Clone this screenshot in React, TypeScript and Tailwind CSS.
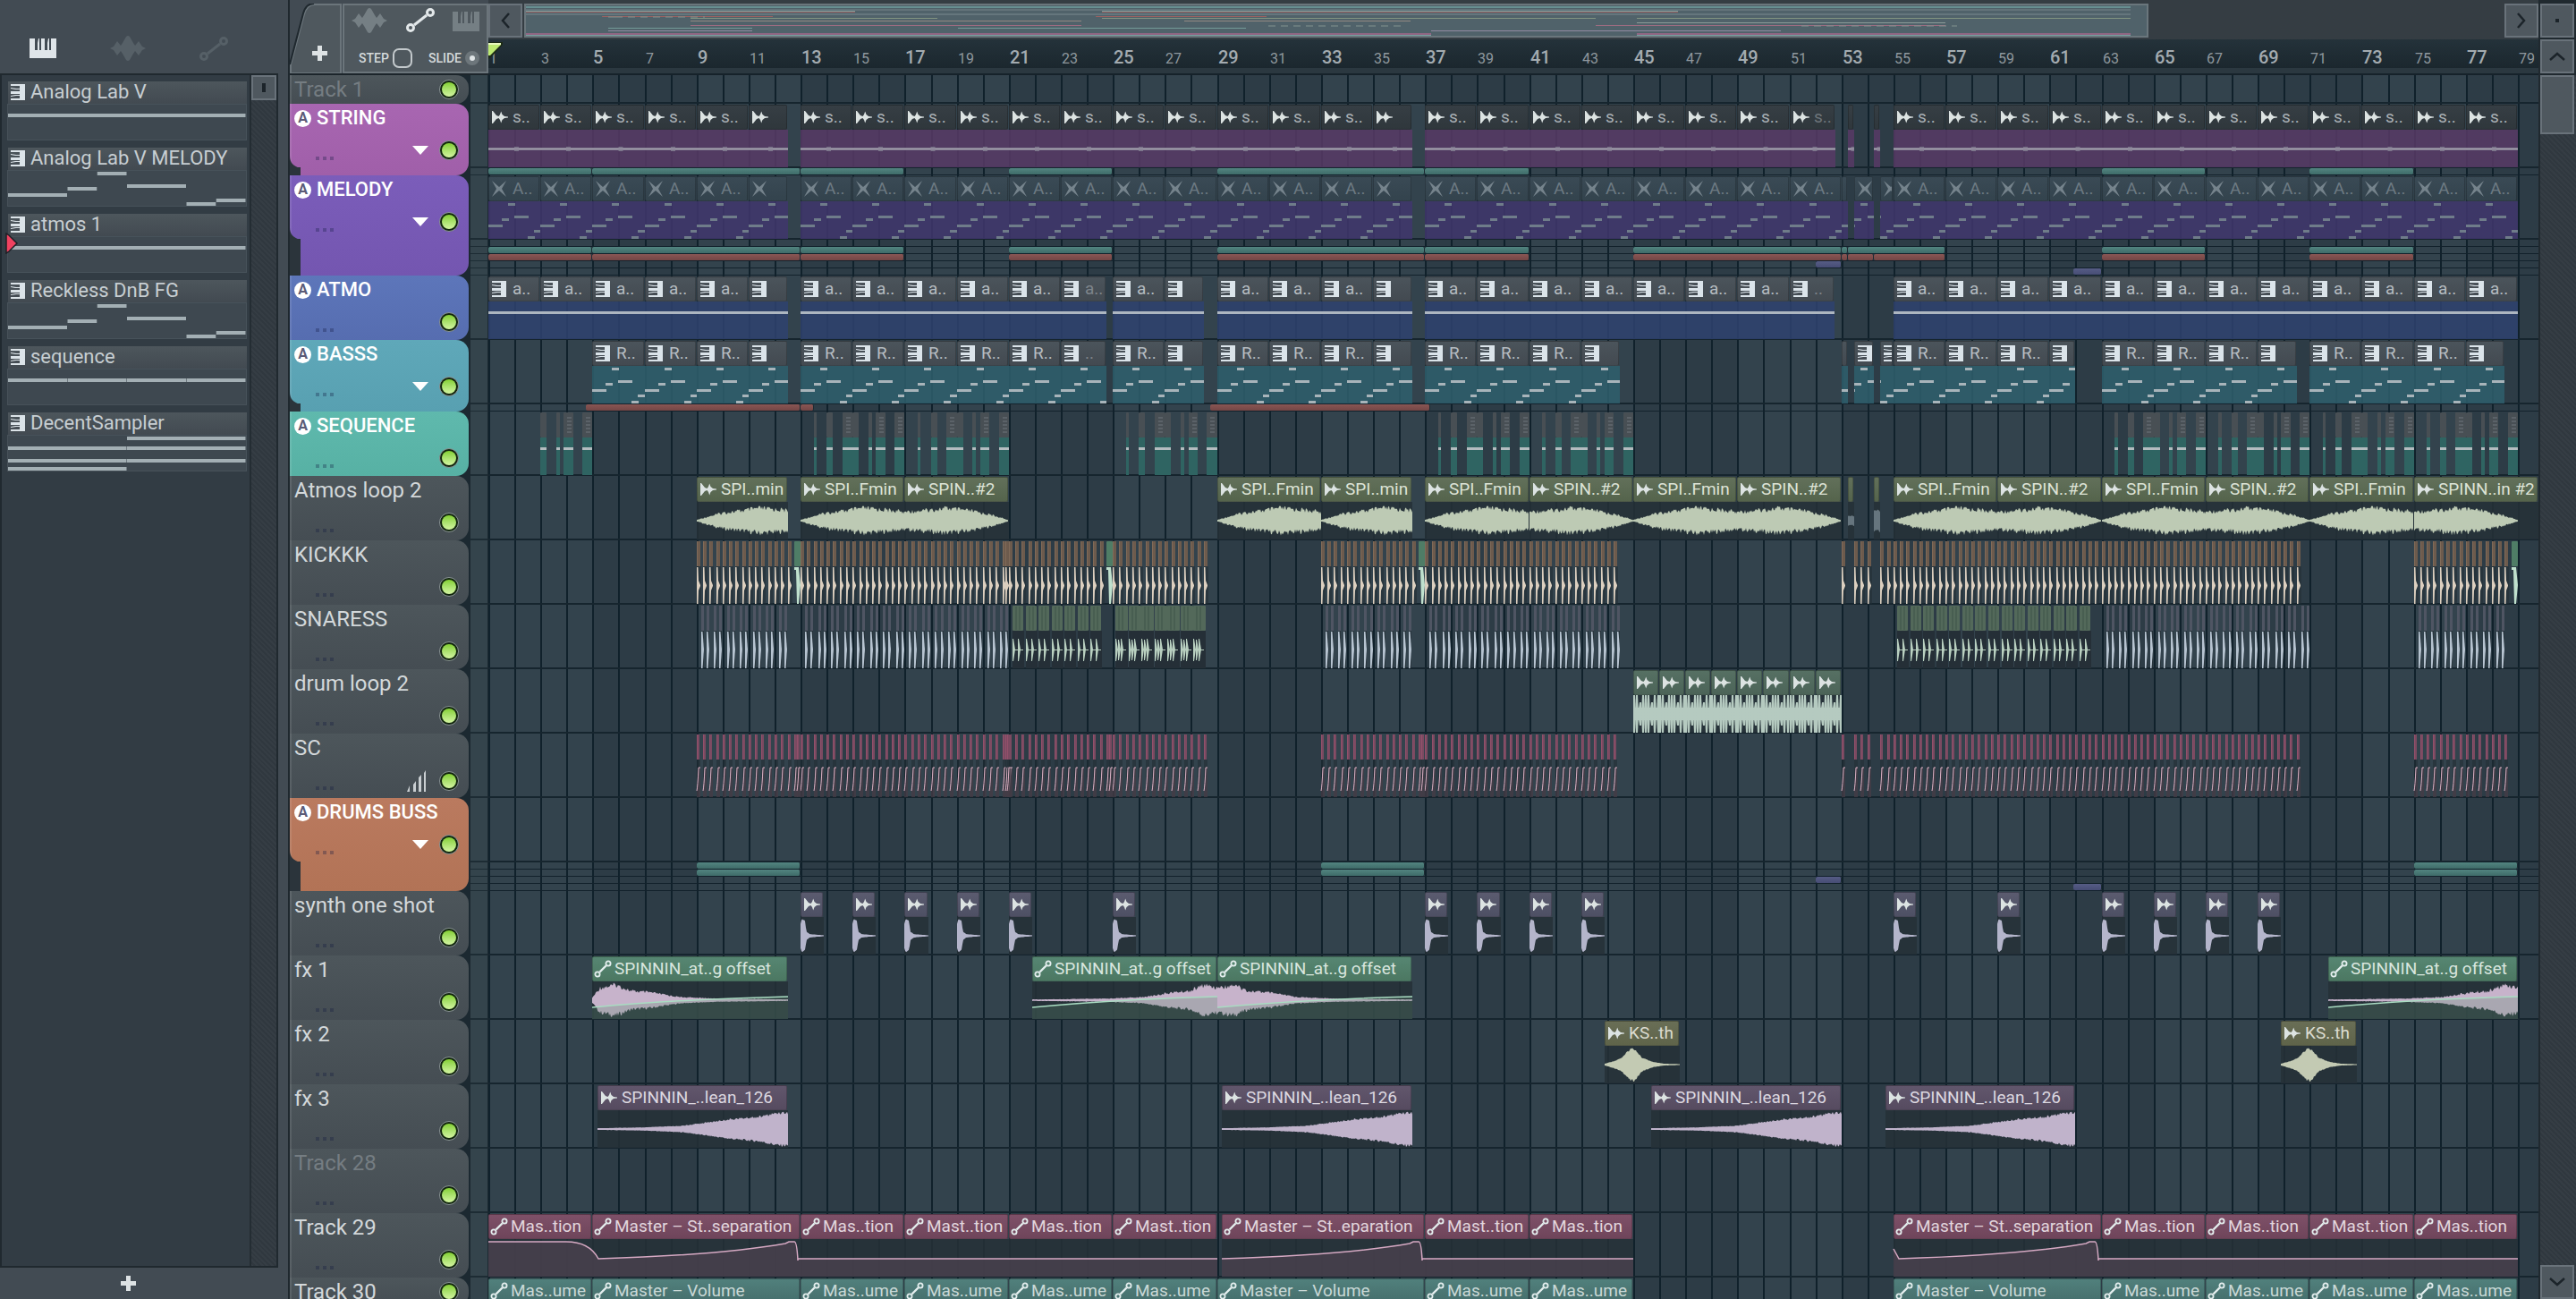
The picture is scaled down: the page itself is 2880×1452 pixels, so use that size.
import type { ReactNode } from 'react';

const BAR = 29.09;
const BODY = 42;
const px = (bar: number) => Math.round((bar - 1) * BAR);

type Icon = 'wave' | 'keys' | 'cross' | 'link' | 'none';
type Clip = { s: number; e: number; label?: string; dim?: boolean };
type Lane = { color: string; spans: number[][] };
type Track = {
  name: string;
  group?: string;
  muted?: boolean;
  meter?: boolean;
  short?: boolean;
  icon?: Icon;
  head?: string;
  body?: string;
  text?: string;
  clips?: Clip[];
  draw?: (clip: Clip, w: number) => ReactNode;
  overlay?: ReactNode;
  lanes?: Lane[];
};

const DARK = 'bg-[#263037d9]';
const TEAL = 'from-[#528480] to-[#3f6c69]';
const RED = 'from-[#8a5654] to-[#734645]';
const INDIGO = 'from-[#565c85] to-[#474d75]';

// two-bar clips repeated from s until e
const run = (s: number, e: number, label: string, tail?: string): Clip[] => {
  const out: Clip[] = [];
  for (let b = s; b < e; b += 2) {
    const end = Math.min(b + 2, e);
    const full = end - b > 1.9;
    out.push({ s: b, e: end, label: full ? label : tail, dim: !full && !!tail });
  }
  return out;
};

const steps = (s: number, e: number, by = 0.25) => {
  const out: number[] = [];
  for (let b = s; b < e - 0.001; b += by) out.push(b);
  return out;
};

const noise = (i: number) => {
  const v = Math.sin(i * 12.9898) * 43758.5453;
  return v - Math.floor(v);
};

const lerp = (points: number[][], t: number) => {
  for (let i = 1; i < points.length; i++) {
    const [x0, y0] = points[i - 1];
    const [x1, y1] = points[i];
    if (t <= x1) return y0 + ((y1 - y0) * (t - x0)) / (x1 - x0 || 1);
  }
  return points[points.length - 1][1];
};

const wavePath = (w: number, env: (t: number) => number, rough = 0.25) => {
  let top = '';
  let bottom = '';
  for (let i = 0; i <= w; i++) {
    const a = env(i / w);
    const up = Math.max(0.6, a * (1 - rough * noise(i + 3)));
    const down = Math.max(0.6, a * (1 - rough * noise(i + 91)));
    top += `${i ? 'L' : 'M'}${i} ${(21 - up).toFixed(1)}`;
    bottom = `L${i} ${(21 + down).toFixed(1)}` + bottom;
  }
  return top + bottom + 'Z';
};

const Drawing = ({ w, children }: { w: number; children: ReactNode }) => (
  <svg className="absolute inset-0" width={w} height={BODY} viewBox={`0 0 ${w} ${BODY}`} aria-hidden="true">
    {children}
  </svg>
);

const MELODY = [
  [0, 0.25, 26],
  [0.25, 0.375, 19],
  [0.375, 0.5, 2],
  [0.5, 0.75, 16],
  [0.75, 0.875, 39],
  [0.875, 1, 32],
];

const drawNotes = (color: string) => (clip: Clip, w: number) => {
  const phase = ((clip.s - 1) % 2) * BAR;
  return (
    <Drawing w={w}>
      {MELODY.map(([a, b, y]) => (
        <rect key={a} x={Math.round(a * 2 * BAR - phase)} y={y} width={Math.round((b - a) * 2 * BAR) + 1} height="3" fill={color} />
      ))}
    </Drawing>
  );
};

const drawLine = (color: string, y: number, h: number) => (_: Clip, w: number) => (
  <Drawing w={w}>
    <rect y={y} width={w} height={h} fill={color} />
  </Drawing>
);

const drawString = (_: Clip, w: number) => (
  <Drawing w={w}>
    <rect y="20" width={w} height="3" fill="#827d90" />
    <rect x={w / 2} y="19" width="5" height="5" fill="#7d778c" />
    <rect y="21" width={w} height="1" fill="#a5a0af" />
  </Drawing>
);

const ATMOS_ENV = [[0, 1], [0.06, 6], [0.13, 11], [0.2, 13], [0.3, 17], [0.4, 15], [0.5, 12], [0.6, 14], [0.7, 17], [0.83, 13], [0.93, 7], [1, 1]];

const drawAtmos = (clip: Clip, w: number) => {
  if (clip.e - clip.s < 1) {
    return (
      <Drawing w={w}>
        <path d={wavePath(w, () => (clip.s > 54 ? 13 : 6))} fill="#66757e" />
      </Drawing>
    );
  }
  const second = clip.label!.endsWith('#2');
  const bars = Math.min(clip.e - clip.s, 4);
  return (
    <Drawing w={w}>
      <path
        d={wavePath(Math.round(bars * BAR), (t) => lerp(ATMOS_ENV, (t * bars) / 8 + (second ? 0.5 : 0)), 0.38)}
        fill="#bdcab4"
      />
    </Drawing>
  );
};

const drawLoop = (_: Clip, w: number) => (
  <Drawing w={w}>
    <rect y="14" width={w} height="14" fill="#b5cac0" />
    {[0, 3, 7, 10, 13, 16, 20, 23, 27].map((x, i) => (
      <path key={x} d={i % 4 === 2 ? `M${x} 8h2l1 13-1 13h-2l-2-13z` : `M${x} 0h2l1 21-1 21h-2l-1-21z`} fill="#b5cac0" />
    ))}
  </Drawing>
);

const drawShot = (_: Clip, w: number) => (
  <Drawing w={w}>
    <path d={wavePath(w, (t) => lerp([[0, 14], [0.06, 20], [0.2, 17], [0.25, 5], [0.4, 2], [0.8, 1], [1, 0.6]], t), 0.1)} fill="#b4b5cb" />
  </Drawing>
);

const FALL = [[0, 3], [0.04, 16], [0.12, 20], [0.2, 12], [0.3, 10], [0.45, 4], [0.65, 2], [1, 1]];

const drawSweep = (clip: Clip, w: number) => {
  const env = (t: number) => {
    if (clip.s === 5) return lerp(FALL, t);
    if (clip.s === 29) return lerp(FALL, Math.min(1, t + 0.04));
    return lerp(FALL, 1.05 - t);
  };
  return (
    <Drawing w={w}>
      <path d={wavePath(w, env, 0.3)} fill="#c7b3cb" />
      <path d={`M0 29Q${w * 0.45} 20 ${w} 17V42H0Z`} fill="#5f8a70" fillOpacity="0.28" />
      <path d={`M0 29Q${w * 0.45} 20 ${w} 17`} fill="none" stroke="#a9dcc2" strokeWidth="1.5" />
    </Drawing>
  );
};

const drawHit = (_: Clip, w: number) => (
  <Drawing w={w}>
    <path d={wavePath(w, (t) => lerp([[0, 1], [0.15, 5], [0.24, 9], [0.34, 19], [0.4, 19], [0.5, 8], [0.65, 3], [0.8, 1], [1, 0.6]], t), 0.15)} fill="#c3cab3" />
  </Drawing>
);

const drawRise = (_: Clip, w: number) => (
  <Drawing w={w}>
    <path d={wavePath(w, (t) => lerp([[0, 1], [0.25, 2], [0.45, 4], [0.7, 12], [0.85, 15], [0.95, 20], [1, 20]], t), 0.18)} fill="#c0b3cb" />
  </Drawing>
);

// lays a whole row of very short clips over the timeline
const Row = ({ children }: { children: ReactNode }) => (
  <svg className="absolute left-0 top-px" width={px(80)} height="70" viewBox={`0 0 ${px(80)} 70`} aria-hidden="true">
    {children}
  </svg>
);

const KICKS = [
  ...steps(9, 12.75),
  ...steps(13, 21),
  20.87,
  ...steps(21, 24.75),
  ...steps(25, 28.75),
  ...steps(33, 36.75),
  ...steps(37, 44.5),
  53, 53.5, 53.75, 54, 54.5, 54.75,
  ...steps(55, 70.75),
  ...steps(75, 78.75),
];

const SIDE = [...KICKS, 12.75, 12.87, 20.94, 24.75, 24.87, 36.75, 36.87];

const Kicks = () => (
  <Row>
    {KICKS.map((b) => {
      const x = px(b);
      return (
        <g key={b}>
          <rect x={x} width="4" height="28" fill="#6d5b4d" />
          <rect x={x} width="1" height="28" fill="#806a58" />
          <rect x={x} y="28" width="5" height="42" fill="#232e35" fillOpacity="0.6" />
          <path d={`M${x} 29h1.500l.5 15 2 5v1l-2 5-.5 15h-1.500z`} fill="#dccfbf" />
        </g>
      );
    })}
    {[12.75, 24.75, 36.75, 78.75].map((b) => {
      const x = px(b);
      return (
        <g key={b}>
          <rect x={x} width="7" height="28" rx="1" fill="#4f7d66" />
          <path d={`M${x} 29h5l2 20-2 21h-2l-1-38h-2z`} fill="#bfe0cd" />
        </g>
      );
    })}
  </Row>
);

const SNARES = [
  ...steps(9, 12.5, 0.5),
  ...steps(13, 21, 0.5),
  ...steps(33, 36.5, 0.5),
  ...steps(37, 44.5, 0.5),
  ...steps(63, 71, 0.5),
  ...steps(75, 78.5, 0.5),
];
const CLAPS = [...steps(21.15, 24.5, 0.5), ...steps(55.15, 62.5, 0.5)];
const FILLS = steps(25.1, 28.5, 0.5);

const Snares = () => (
  <Row>
    {SNARES.flatMap((b) => [b + 0.17, b + 0.38]).map((b) => {
      const x = px(b);
      return (
        <g key={b}>
          <rect x={x} width="3" height="28" fill="#4f5563" />
          <rect x={x} y="28" width="3" height="42" fill="#232e35" fillOpacity="0.6" />
          <path d={`M${x} 29h1.500l1.500 20-1.500 21h-1.500z`} fill="#b6c3d0" />
        </g>
      );
    })}
    {[...CLAPS, ...FILLS].map((b) => {
      const x = px(b);
      const dense = b > 25 && b < 29;
      return (
        <g key={b}>
          <rect x={x} width={dense ? 14 : 12} height="28" rx="1" fill="#53695a" />
          <path d={`M${x + 4} 1v26M${x + 8} 1v26`} stroke="#3f5448" />
          <rect x={x} y="28" width={dense ? 14 : 13} height="42" fill="#252f37" />
          <path d={`M${x} 37h1l2 12-2 13h-1zM${x + 6} 37h1l2 12-2 13h-1z${dense ? `M${x + 3} 38h1l2 11-2 12h-1z` : ''}M${x} 49h12v1h-12z`} fill="#b9d0c0" />
        </g>
      );
    })}
  </Row>
);

const SideChain = () => (
  <Row>
    {SIDE.map((b) => {
      const x = px(b);
      return (
        <g key={b}>
          <rect x={x} width="3" height="28" fill="#7b4a61" />
          <rect x={x} width="1" height="28" fill="#93506b" />
          <rect x={x} y="28" width="4" height="42" fill="#232e35" fillOpacity="0.6" />
          <path d={`M${x} 63L${x + 2} 37h2v33h-4z`} fill="#5a4350" fillOpacity="0.5" />
          <path d={`M${x} 63q1 -4 2 -26h2`} fill="none" stroke="#e0b4c8" />
        </g>
      );
    })}
  </Row>
);

const SEQ = [[0.5, 0.62], [1, 1.24], [1.6, 2], [2, 2.24], [2.6, 2.74], [2.9, 3.26], [3.62, 4]];

const Sequence = () => (
  <Row>
    {[1, 13, 17, 25, 37, 41, 63, 67, 71, 75].flatMap((cell) =>
      SEQ.filter(([a]) => cell > 1 || a >= 2).map(([a, b]) => {
        const x = px(cell + a);
        const w = px(cell + b) - x;
        return (
          <g key={cell + a}>
            <rect x={x} width={w} height="28" rx="1" fill="#484f54" />
            {w > 9 && <path d={`M${x + 4} 6h5M${x + 4} 10h5M${x + 4} 14h5M${x + 4} 18h5M${x + 4} 22h5`} stroke="#6f777c" />}
            <rect x={x} y="28" width={w} height="42" fill="#2f6462" />
            <rect x={x} y="39" width={w} height="3" fill="#b3bcbf" />
          </g>
        );
      }),
    )}
  </Row>
);

const rise = (b: number) => `Q${px(b + 4.5)} 46 ${px(b + 7)} 33l4 -2h6q3 0 4 21v-2`;
const CURVES: [number, number, string][] = [
  [1, 29, `M0 31H${px(4)}q26 0 36 19${rise(5.4)}H${px(29)}`],
  [29.2, 45, `M${px(29.2)} 50${rise(29.4)}H${px(45)}`],
  [55, 79, `M${px(55)} 39l6 11${rise(55.4)}H${px(79)}`],
];

const Separation = () => (
  <Row>
    {CURVES.map(([s, e, d]) => (
      <g key={s}>
        <rect x={px(s)} y="28" width={px(e) - px(s)} height="42" fill="#263037" fillOpacity="0.85" />
        <path d={`${d}V70H${px(s)}Z`} fill="#4d4350" fillOpacity="0.75" />
        <path d={d} fill="none" stroke="#d6a9c3" strokeWidth="1.5" />
      </g>
    ))}
  </Row>
);

const each = (spans: [number, number, string][]): Clip[] => spans.map(([s, e, label]) => ({ s, e, label }));

const TRACKS: Track[] = [
  { name: 'Track 1', muted: true, short: true },
  {
    name: 'STRING',
    group: 'from-[#a866b1] to-[#a05fa9]',
    icon: 'wave',
    head: 'from-[#363e44] to-[#2f373c]',
    body: 'bg-[#583a66d9]',
    text: 'text-[#a9b0b5]',
    clips: [
      ...run(1, 12.5, 's..'), ...run(13, 36.5, 's..'), ...run(37, 52.78, 's..', 's..'),
      { s: 53.25, e: 53.5 }, { s: 54.25, e: 54.5 }, ...run(55, 79, 's..'),
    ],
    draw: drawString,
    lanes: [{ color: TEAL, spans: [[1, 5], [5, 13], [13, 17], [21, 25], [29, 37], [37, 41], [63, 67], [71, 75]] }],
  },
  {
    name: 'MELODY',
    group: 'from-[#7b5dba] to-[#7456b0]',
    icon: 'cross',
    head: 'from-[#3a4a55] to-[#33434d]',
    body: 'bg-[#41366dd9]',
    text: 'text-[#6d7a83]',
    clips: [
      ...run(1, 12.5, 'A..'), ...run(13, 36.5, 'A..'), ...run(37, 53.25, 'A..'),
      { s: 53.5, e: 54.25 }, { s: 54.5, e: 55 }, ...run(55, 79, 'A..'),
    ],
    draw: drawNotes('#6f7c8a'),
    lanes: [
      { color: TEAL, spans: [] },
      { color: TEAL, spans: [[1, 5], [5, 13], [13, 17], [21, 25], [29, 37], [37, 41], [45, 53], [53, 53.25], [53.25, 57], [63, 67], [71, 75]] },
      { color: RED, spans: [[1, 5], [5, 13], [13, 17], [21, 25], [29, 37], [37, 41], [45, 53], [53, 53.25], [53.25, 54.25], [54.25, 57], [63, 67], [71, 75]] },
      { color: INDIGO, spans: [[52, 53]] },
      { color: INDIGO, spans: [[61.9, 63]] },
    ],
  },
  {
    name: 'ATMO',
    group: 'from-[#5d76ba] to-[#566db0]',
    icon: 'keys',
    head: 'from-[#4b545b] to-[#434a51]',
    body: 'bg-[#2f4270d9]',
    text: 'text-[#b6bdc2]',
    clips: [
      ...run(1, 12.5, 'a..'), ...run(13, 24.75, 'a..', 'a..'), ...run(25, 28.5, 'a..'),
      ...run(29, 36.5, 'a..'), ...run(37, 52.73, 'a..', '..'), ...run(55, 79, 'a..'),
    ],
    draw: drawLine('#adb6c0', 11, 3),
  },
  {
    name: 'BASSS',
    group: 'from-[#5fa8b9] to-[#58a0b1]',
    icon: 'keys',
    head: 'from-[#4b545b] to-[#434a51]',
    body: 'bg-[#2f5f6dd9]',
    text: 'text-[#b6bdc2]',
    clips: [
      ...run(5, 12.5, 'R..'), ...run(13, 24.75, 'R..', '..'), ...run(25, 28.5, 'R..'),
      ...run(29, 36.5, 'R..'), ...run(37, 44.5, 'R..'), { s: 53, e: 53.25 }, { s: 53.5, e: 54.25 },
      { s: 54.5, e: 55 }, ...run(55, 62, 'R..'), ...run(63, 70.5, 'R..'), ...run(71, 78.5, 'R..'),
    ],
    draw: drawNotes('#a8b4ba'),
    lanes: [{ color: RED, spans: [[4.75, 13], [13, 13.5], [28.75, 37.2]] }],
  },
  { name: 'SEQUENCE', group: 'from-[#5fb9ad] to-[#57b1a4]', overlay: <Sequence /> },
  {
    name: 'Atmos loop 2',
    icon: 'wave',
    head: 'from-[#62705a] to-[#55644c]',
    body: DARK,
    text: 'text-[#dde3d6]',
    clips: [
      ...each([
        [9, 12.5, 'SPI..min'], [13, 17, 'SPI..Fmin'], [17, 21, 'SPIN..#2'], [29, 33, 'SPI..Fmin'], [33, 36.5, 'SPI..min'],
        [37, 41, 'SPI..Fmin'], [41, 45, 'SPIN..#2'], [45, 49, 'SPI..Fmin'], [49, 53, 'SPIN..#2'],
      ]),
      { s: 53.25, e: 53.5 }, { s: 54.25, e: 54.5 },
      ...each([
        [55, 59, 'SPI..Fmin'], [59, 63, 'SPIN..#2'], [63, 67, 'SPI..Fmin'], [67, 71, 'SPIN..#2'],
        [71, 75, 'SPI..Fmin'], [75, 79.8, 'SPINN..in #2'],
      ]),
    ],
    draw: drawAtmos,
  },
  { name: 'KICKKK', overlay: <Kicks /> },
  { name: 'SNARESS', overlay: <Snares /> },
  {
    name: 'drum loop 2',
    icon: 'wave',
    head: 'from-[#567063] to-[#4c6458]',
    body: DARK,
    clips: steps(45, 53, 1).map((s) => ({ s, e: s + 1 })),
    draw: drawLoop,
  },
  { name: 'SC', meter: true, overlay: <SideChain /> },
  {
    name: 'DRUMS BUSS',
    group: 'from-[#ba7a5f] to-[#b27356]',
    lanes: [
      { color: TEAL, spans: [[9, 13], [33, 37], [75, 79]] },
      { color: TEAL, spans: [[9, 13], [33, 37], [75, 79]] },
      { color: INDIGO, spans: [[52, 53]] },
      { color: INDIGO, spans: [[61.9, 63]] },
    ],
  },
  {
    name: 'synth one shot',
    icon: 'wave',
    head: 'from-[#5b5b6f] to-[#4e5064]',
    body: DARK,
    clips: [13, 15, 17, 19, 21, 25, 37, 39, 41, 43, 55, 59, 63, 65, 67, 69].map((s) => ({ s, e: s + 0.9 })),
    draw: drawShot,
  },
  {
    name: 'fx 1',
    icon: 'link',
    head: 'from-[#568672] to-[#4c7862]',
    body: DARK,
    text: 'text-[#d9e6df]',
    clips: each([
      [5, 12.5, 'SPINNIN_at..g offset'], [21.9, 29, 'SPINNIN_at..g offset'],
      [29, 36.5, 'SPINNIN_at..g offset'], [71.7, 79, 'SPINNIN_at..g offset'],
    ]),
    draw: drawSweep,
  },
  {
    name: 'fx 2',
    icon: 'wave',
    head: 'from-[#696e56] to-[#5f644a]',
    body: DARK,
    text: 'text-[#dcdcd0]',
    clips: each([[43.9, 46.8, 'KS..th'], [69.9, 72.8, 'KS..th']]),
    draw: drawHit,
  },
  {
    name: 'fx 3',
    icon: 'wave',
    head: 'from-[#61566c] to-[#564b60]',
    body: DARK,
    text: 'text-[#dcd8e0]',
    clips: each([
      [5.2, 12.5, 'SPINNIN_..lean_126'], [29.2, 36.5, 'SPINNIN_..lean_126'],
      [45.7, 53, 'SPINNIN_..lean_126'], [54.7, 62, 'SPINNIN_..lean_126'],
    ]),
    draw: drawRise,
  },
  { name: 'Track 28', muted: true },
  {
    name: 'Track 29',
    icon: 'link',
    head: 'from-[#7e5068] to-[#6f455b]',
    text: 'text-[#e2d6dd]',
    clips: each([
      [1, 5, 'Mas..tion'], [5, 13, 'Master – St..separation'], [13, 17, 'Mas..tion'], [17, 21, 'Mast..tion'],
      [21, 25, 'Mas..tion'], [25, 29, 'Mast..tion'], [29.2, 37, 'Master – St..eparation'], [37, 41, 'Mast..tion'],
      [41, 45, 'Mas..tion'], [55, 63, 'Master – St..separation'], [63, 67, 'Mas..tion'], [67, 71, 'Mas..tion'],
      [71, 75, 'Mast..tion'], [75, 79, 'Mas..tion'],
    ]),
    overlay: <Separation />,
  },
  {
    name: 'Track 30',
    short: true,
    icon: 'link',
    head: 'from-[#51807c] to-[#456e6c]',
    text: 'text-[#c9d8d6]',
    clips: each([
      [1, 5, 'Mas..ume'], [5, 13, 'Master – Volume'], [13, 17, 'Mas..ume'], [17, 21, 'Mas..ume'],
      [21, 25, 'Mas..ume'], [25, 29, 'Mas..ume'], [29, 37, 'Master – Volume'], [37, 41, 'Mas..ume'],
      [41, 45, 'Mas..ume'], [55, 63, 'Master – Volume'], [63, 67, 'Mas..ume'], [67, 71, 'Mas..ume'],
      [71, 75, 'Mas..ume'], [75, 79, 'Mas..ume'],
    ]),
  },
];

const WaveIcon = ({ className = '' }: { className?: string }) => (
  <svg className={className} width="18" height="16" viewBox="0 0 18 16" fill="currentColor" aria-hidden="true">
    <path d="M0 1h1l4 5 2.500 1L9 5l1.200-3.500L11.500 5l2.500 2 4 .600v.800L14 9l-2.500 2-1.300 3.500L9 11 7.500 9 5 10l-4 5H0z" />
  </svg>
);

const KeysIcon = ({ className = '' }: { className?: string }) => (
  <svg className={className} width="16" height="18" viewBox="0 0 16 18" fill="currentColor" aria-hidden="true">
    <path d="M0 0h16v18H0v-2h10v-3H6l-6 1v-1l5-1h5v-1H0V8h10V6H5L0 5V4l6 1h4V2H0z" />
  </svg>
);

const CrossIcon = () => (
  <svg width="16" height="18" viewBox="0 0 16 18" fill="currentColor" aria-hidden="true">
    <path d="M0 0l8 7 8-7-5 9 5 9-8-7-8 7 5-9z" />
  </svg>
);

const LinkIcon = ({ className = '' }: { className?: string }) => (
  <svg className={className} width="20" height="20" viewBox="0 0 20 20" fill="none" stroke="currentColor" strokeWidth="1.800" aria-hidden="true">
    <circle cx="4" cy="16" r="2.600" />
    <circle cx="16" cy="4" r="2.600" />
    <path d="M6.500 13.500l7-7" strokeWidth="2.400" />
  </svg>
);

const BigWave = () => (
  <svg width="40" height="28" viewBox="0 0 40 28" fill="currentColor" aria-hidden="true">
    <path d="M0 14l4-2 4-6 4 5 2-3 4-7q2-2 4 0l4 7 2 3 4-5 4 6 4 2-4 2-4 6-4-5-2 3-4 7q-2 2-4 0l-4-7-2-3-4 5-4-6z" />
  </svg>
);

const BigKeys = () => (
  <svg width="30" height="22" viewBox="0 0 30 22" fill="currentColor" aria-hidden="true">
    <path d="M0 0h6v13h3V5L10 0h1v13h2V0h4v13h3V5l1-5h1v13h2V0h6v22H0z" />
  </svg>
);

const BigLink = () => (
  <svg width="32" height="27" viewBox="0 0 32 27" fill="none" stroke="currentColor" strokeWidth="3" aria-hidden="true">
    <circle cx="5" cy="22" r="3.500" />
    <circle cx="27" cy="5" r="3.500" />
    <path d="M9 19L23 8" />
  </svg>
);

const Chevron = ({ turn = '' }: { turn?: string }) => (
  <svg className={turn} width="10" height="18" viewBox="0 0 10 18" fill="none" stroke="#1c242a" strokeWidth="2.500" aria-hidden="true">
    <path d="M9 1L2 9l7 8" />
  </svg>
);

const ICONS: Record<Icon, ReactNode> = {
  wave: <WaveIcon className="shrink-0" />,
  keys: <KeysIcon className="shrink-0" />,
  cross: <CrossIcon />,
  link: <LinkIcon className="shrink-0" />,
  none: null,
};

const ICON_TONE: Record<Icon, string> = {
  wave: 'text-[#dce3e2]',
  keys: 'text-[#dbe4ea]',
  cross: 'text-[#75838c]',
  link: 'text-[#e4eeee]',
  none: '',
};

const ClipBox = ({ clip, track }: { clip: Clip; track: Track }) => {
  const left = px(clip.s);
  const w = px(clip.e) - left;
  const icon = track.icon ?? 'none';
  return (
    <div className="absolute inset-y-px overflow-hidden" style={{ left, width: w }}>
      <div
        className={`flex h-7 mr-px items-center overflow-hidden rounded-[2px] border border-black/20 bg-linear-to-b ${track.head} ${icon === 'link' ? 'gap-1 pl-px' : 'pl-[3px]'}`}
      >
        {w > 12 && (
          <span className={`flex w-[19px] shrink-0 ${ICON_TONE[icon]}`}>{ICONS[icon]}</span>
        )}
        {clip.label && (
          <span className={`text-[19px] leading-6 whitespace-nowrap ${icon === 'link' ? '' : 'pl-1'} ${track.text} ${clip.dim ? 'opacity-50' : ''}`}>
            {clip.label}
          </span>
        )}
      </div>
      {track.draw && <div className={`relative h-[42px] ${track.body}`}>{track.draw(clip, w)}</div>}
    </div>
  );
};

const Led = ({ name }: { name: string }) => (
  <button
    type="button"
    aria-label={`Mute ${name}`}
    className="size-[22px] shrink-0 rounded-full border border-[#8b9496] bg-[#12260e] p-[2px]"
  >
    <span className="block size-full rounded-full bg-linear-to-b from-[#83cf2e] to-[#d3f5a0]" />
  </button>
);

const TrackHead = ({ track }: { track: Track }) => {
  const { name, group, muted, meter, short, lanes } = track;
  const tone = group ?? 'from-[#4d565b] to-[#454d53]';
  return (
    <div className={`relative flex w-[200px] shrink-0 justify-between rounded-r-[14px] border-l-2 border-white/10 bg-linear-to-b ${tone}`}>
      <div className="pl-[3px] pt-px">
        <h3
          className={`flex items-center gap-[6px] whitespace-nowrap ${group ? 'text-[22px] font-medium leading-[30px] text-white' : 'text-2xl leading-[30px]'} ${muted ? 'text-[#757d82]' : 'text-[#d3d8da]'}`}
        >
          {group && (
            <span className="grid size-[19px] place-items-center rounded-full bg-white text-base font-bold leading-none text-[#5b5b78]">A</span>
          )}
          {name}
        </h3>
        {!short && (
          <div className="flex gap-1 pt-[28px] pl-[24px] opacity-30">
            <span className="size-1 bg-[#101840]" />
            <span className="size-1 bg-[#101840]" />
            <span className="size-1 bg-[#101840]" />
          </div>
        )}
      </div>
      <div className={`absolute right-[11px] flex items-center gap-3 ${short ? 'top-[5px]' : 'top-[41px]'}`}>
        {group && lanes && (
          <svg width="19" height="10" viewBox="0 0 19 10" fill="#fff" aria-hidden="true">
            <path d="M1 0h18l-9 10z" />
          </svg>
        )}
        {meter && (
          <svg width="24" height="24" viewBox="0 0 24 24" fill="#c9ced1" aria-hidden="true">
            <path d="M0 24l3-7v7zM7 24V16l3-4v12zM13 24V8l3-3v19zM19 24V3l2-3v24z" />
          </svg>
        )}
        <Led name={name} />
      </div>
      {group && lanes && (
        <>
          <span className="absolute -left-[2px] top-[71px] bottom-0 w-3 bg-[#2b343b]" />
          <svg className="absolute -left-[2px] top-[58px]" width="12" height="14" viewBox="0 0 12 14" aria-hidden="true">
            <path d="M0 0c0 8 4 12 12 14H0z" fill="#2b343b" />
          </svg>
        </>
      )}
    </div>
  );
};

const LaneRow = ({ lane }: { lane: Lane }) => (
  <div className="relative h-2 shadow-[inset_0_-1px_0_#12212b]">
    {lane.spans.map(([s, e]) => (
      <div
        key={s}
        className={`absolute top-0 h-[7px] rounded-[2px] border-r border-[#1c2b33] bg-linear-to-b ${lane.color}`}
        style={{ left: px(s), width: px(e) - px(s) }}
      />
    ))}
  </div>
);

const TrackRow = ({ track }: { track: Track }) => {
  const main = track.short ? 'h-8' : 'h-[72px]';
  const lanes = track.lanes ?? [];
  return (
    <section className="flex">
      <TrackHead track={track} />
      <div className="ml-[2px] w-[19px] shrink-0 bg-[#34444c]">
        <div className={`${main} shadow-[inset_0_-2px_0_#1d2c34]`} />
        {lanes.map((_, i) => (
          <div key={i} className="h-2 shadow-[inset_0_-1px_0_#1d2c34]" />
        ))}
      </div>
      <div className="ml-px min-w-0 flex-1">
        <div className={`relative overflow-hidden shadow-[inset_0_-2px_0_#16252e] ${main}`}>
          {track.clips?.map((clip) => <ClipBox key={clip.s} clip={clip} track={track} />)}
          {track.overlay}
        </div>
        {lanes.map((lane, i) => (
          <LaneRow key={i} lane={lane} />
        ))}
      </div>
    </section>
  );
};

const Grid = () => (
  <div className="absolute inset-y-0 right-0 left-[222px] overflow-hidden bg-[#2d3c46]">
    {steps(1, 80, 1).map((b) => (
      <div
        key={b}
        className={`absolute inset-y-0 border-l-2 border-[#10212b] ${Math.floor((b - 1) / 4) % 2 ? 'bg-[#2d3c46]' : 'bg-[#33434d]'}`}
        style={{ left: px(b), width: px(b + 1) - px(b) }}
      />
    ))}
  </div>
);

const Ruler = () => (
  <div className="relative h-[38px] overflow-hidden border-b-[6px] border-[#2b3840] bg-linear-to-b from-[#24323a] to-[#1b272e]">
    {steps(1, 80, 2).map((b) => {
      const major = (b - 1) % 4 === 0 && b > 1;
      return (
        <span
          key={b}
          className={`absolute bottom-0 ${major ? 'text-xl font-medium leading-6 text-[#a3abb0]' : 'text-base leading-5 text-[#8f989e]'}`}
          style={{ left: px(b) + 1 }}
        >
          {b}
        </span>
      );
    })}
    <svg className="absolute left-0 top-[3px]" width="17" height="19" viewBox="0 0 17 19" aria-hidden="true">
      <path d="M0 0h16v3L3 17l-3 2z" fill="#1c2a16" />
      <path d="M0 1h14v2L2 15H0z" fill="#bdea72" />
      <path d="M0 1h14v2H0z" fill="#e8f8c0" />
    </svg>
  </div>
);

// y, height, colour, start bar, end bar
const MAP: [number, number, string, number, number][] = [
  [3, 2, '#6f9f9f', 1, 79],
  [6, 2, '#6a7a80', 1, 79],
  [8, 1, '#86b5b2', 1, 17],
  [8, 1, '#86b5b2', 29, 57],
  [9, 1, '#b5625f', 1, 17],
  [9, 1, '#b5625f', 29, 57],
  [11, 2, '#6c7d84', 1, 79],
  [14, 1, '#b5625f', 4.7, 13],
  [14, 1, '#b5625f', 28.7, 37],
  [16, 1, '#93a58a', 9, 21],
  [16, 1, '#93a58a', 29, 53],
  [16, 1, '#93a58a', 55, 79],
  [19, 1, '#a9958a', 9, 28],
  [19, 1, '#a9958a', 33, 44],
  [21, 1, '#9fb0a8', 55, 70],
  [24, 1, '#b5708a', 9, 28],
  [24, 1, '#b5708a', 53, 70],
  [27, 1, '#7fb0a8', 5, 12],
  [27, 1, '#7fb0a8', 22, 36],
  [30, 1, '#a79ab5', 5, 12],
  [30, 1, '#a79ab5', 45, 62],
  [33, 2, '#a7688c', 1, 45],
  [33, 2, '#a7688c', 55, 79],
  [35, 1, '#86b5b2', 1, 45],
  [35, 1, '#86b5b2', 55, 79],
];

const MiniMap = () => (
  <div className="h-[38px] w-[1816px] shrink border-2 border-[#6a767c] bg-[#50626a]">
    <svg className="block" width="100%" height="34" viewBox="0 0 1812 34" preserveAspectRatio="none" aria-hidden="true">
      {MAP.map(([y, h, fill, s, e]) => (
        <rect key={`${y}-${s}`} x={(s - 1) * 23} y={y - 2} width={(e - s) * 23} height={h} fill={fill} fillOpacity="0.75" />
      ))}
      <path d="M92 13H100M100 13H200M830 23H980M1426 23H1600" stroke="#82938f" strokeDasharray="8 6" fill="none" />
    </svg>
  </div>
);

const Square = ({ label, children, className = '' }: { label: string; children?: ReactNode; className?: string }) => (
  <button type="button" aria-label={label} className={`grid w-[38px] shrink-0 place-items-center border-2 border-[#69727a] bg-[#4f585f] ${className}`}>
    {children}
  </button>
);

type Note = [number, number, number];
const PATTERNS: { name: string; notes: Note[] }[] = [
  { name: 'Analog Lab V', notes: [[0, 1, 10]] },
  { name: 'Analog Lab V MELODY', notes: MELODY.map(([a, b, y]) => [a, b, y - 1] as Note) },
  { name: 'atmos 1', notes: [[0, 1, 10]] },
  { name: 'Reckless DnB FG', notes: MELODY.map(([a, b, y]) => [a, b, y - 1] as Note) },
  { name: 'sequence', notes: [[0, 0.25, 10], [0.25, 0.5, 10], [0.5, 0.75, 10], [0.75, 1, 10]] },
  { name: 'DecentSampler', notes: [[0.5, 1, 1], [0, 0.5, 12], [0.5, 1, 12], [0, 0.5, 26], [0.5, 1, 26], [0, 0.5, 37]] },
];

const Picker = () => (
  <aside className="flex w-[311px] shrink-0 flex-col">
    <div className="flex h-[82px] items-end gap-[60px] pb-[14px] pl-[33px]">
      <button type="button" aria-label="Patterns" className="pb-[3px] text-[#dfe5e9]"><BigKeys /></button>
      <button type="button" aria-label="Audio clips" className="text-[#566067]"><BigWave /></button>
      <button type="button" aria-label="Automation" className="text-[#566067]"><BigLink /></button>
    </div>
    <div className="flex min-h-0 flex-1 border-2 border-[#20292f] bg-[#323c44]">
      <div className="relative flex-1">
        <ul className="flex flex-col gap-2 pt-[7px] pl-[6px] pr-[3px]">
          {PATTERNS.map((p) => (
            <li key={p.name}>
              <div className="ml-px flex h-[25px] items-center gap-[6px] bg-linear-to-b from-[#4d565c] to-[#424a51] pb-[2px] pl-[3px] text-[22px] leading-none text-[#c7ced2]">
                <KeysIcon className="shrink-0 text-[#dbe3e8]" />
                {p.name}
              </div>
              <div className="border border-[#47525a] bg-[#3e4850]">
                <svg className="block" width="100%" height="39" viewBox="0 0 268 39" preserveAspectRatio="none" aria-hidden="true">
                  {p.notes.map(([a, b, y]) => (
                    <rect key={`${a}-${y}`} x={a * 268} y={Math.min(y, 35)} width={(b - a) * 268 - 0.5} height="4" fill="#a3afb4" />
                  ))}
                </svg>
              </div>
            </li>
          ))}
        </ul>
        <svg className="absolute left-[4px] top-[176px]" width="15" height="24" viewBox="0 0 15 24" aria-hidden="true">
          <path d="M1 1l3 2 9 9-9 9-3 2z" fill="#f04260" stroke="#1d1f25" strokeWidth="1.500" />
        </svg>
      </div>
      <div className="w-[30px] border-l-2 border-[#242d33] bg-[repeating-linear-gradient(45deg,#353d44_0_2px,#30383f_2px_4px)]">
        <button type="button" aria-label="Scroll patterns" className="grid h-[28px] w-full place-items-center border-2 border-[#69727a] bg-[#4f585f]">
          <span className="h-[10px] w-1 bg-[#1c242a]" />
        </button>
      </div>
    </div>
    <button type="button" aria-label="Add pattern" className="grid h-[35px] w-[286px] place-items-center">
      <Plus />
    </button>
  </aside>
);

const Plus = () => (
  <svg width="17" height="17" viewBox="0 0 17 17" fill="#dde2e4" aria-hidden="true">
    <path d="M6 0h5v6h6v5h-6v6H6v-6H0V6h6z" />
  </svg>
);

const Tools = () => (
  <div className="flex h-[84px] w-[222px] shrink-0 items-end border-b-2 border-[#1c252b] pt-1">
    <button type="button" aria-label="Add track" className="relative grid h-full w-[59px] place-items-center pt-8 pl-2">
      <svg className="absolute inset-0" width="59" height="78" viewBox="0 0 59 78" aria-hidden="true">
        <path d="M1 78V68L16 12Q19 1 28 1h29v77z" fill="#4f585e" stroke="#6b757b" strokeWidth="2" />
        <path d="M0 68L15 11Q18 0 27 0" fill="none" stroke="#1f282e" strokeWidth="2" />
      </svg>
      <span className="relative"><Plus /></span>
    </button>
    <div className="flex h-full flex-1 flex-col justify-between border-2 border-[#6b757b] bg-[#4f585e] px-2 pt-[3px] pb-1">
      <div className="flex items-start justify-between">
        <button type="button" aria-label="Audio focus" className="text-[#757f84]"><BigWave /></button>
        <button type="button" aria-label="Automation focus" className="text-[#e3e8ea]"><BigLink /></button>
        <button type="button" aria-label="Pattern focus" className="pt-1 text-[#757f84]"><BigKeys /></button>
      </div>
      <div className="flex items-center justify-between pl-2 text-sm font-medium text-[#d5dadc]">
        <label className="flex items-center gap-1">
          STEP
          <input type="checkbox" className="size-[22px] appearance-none rounded-[7px] border-2 border-[#c3c9cc]" />
        </label>
        <label className="flex items-center gap-1">
          SLIDE
          <input type="radio" defaultChecked className="size-4 appearance-none rounded-full border-[5px] border-[#6d767b] bg-[#dfe4e6]" />
        </label>
      </div>
    </div>
  </div>
);

export default function App() {
  return (
    <div className="flex h-screen w-full overflow-hidden bg-[#424b53] font-[Roboto,sans-serif]">
      <Picker />
      <main className="ml-[11px] flex min-w-0 flex-1 flex-col border-l-2 border-[#1f282e]">
        <header className="flex">
          <Tools />
          <div className="flex h-[84px] min-w-0 flex-1 flex-col border-b-2 border-[#16222a] bg-[#353d43] pt-1">
            <div className="mb-[2px] flex h-[38px] gap-[2px]">
              <Square label="Scroll left"><Chevron /></Square>
              <MiniMap />
              <div className="flex-1" />
              <Square label="Scroll right"><Chevron turn="rotate-180" /></Square>
            </div>
            <Ruler />
          </div>
          <div className="flex w-[42px] shrink-0 flex-col gap-[2px] border-b-2 border-[#20292f] bg-[#20292f] pt-1 pl-[2px]">
            <Square label="Options" className="h-[38px]"><span className="size-1 bg-[#1c242a]" /></Square>
            <Square label="Scroll up" className="h-[38px]"><Chevron turn="rotate-90" /></Square>
          </div>
        </header>
        <div className="flex min-h-0 flex-1">
          <div className="relative min-w-0 flex-1 overflow-hidden bg-[#1c2931]">
            <Grid />
            <div className="relative">
              {TRACKS.map((track) => <TrackRow key={track.name} track={track} />)}
            </div>
          </div>
          <div className="flex w-[42px] shrink-0 flex-col justify-between border-l-2 border-[#20292f] bg-[repeating-linear-gradient(45deg,#353d44_0_2px,#30383f_2px_4px)]">
            <Square label="Scroll thumb" className="h-[66px]" />
            <Square label="Scroll down" className="h-[38px]"><Chevron turn="-rotate-90" /></Square>
          </div>
        </div>
      </main>
    </div>
  );
}
